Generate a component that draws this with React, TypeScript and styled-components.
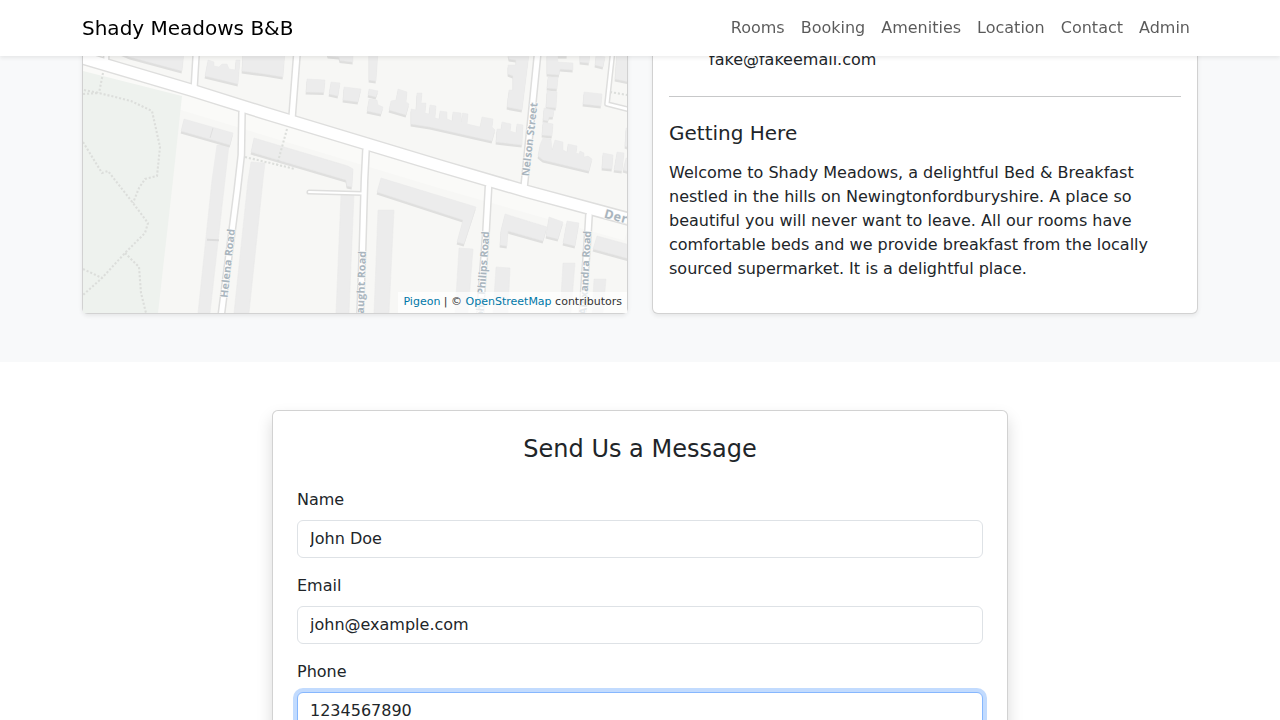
import React from "react";
import styled, { createGlobalStyle, css } from "styled-components";

const GlobalStyle = createGlobalStyle`
  *, *::before, *::after { box-sizing: border-box; }
  body {
    margin: 0;
    background: #fff;
    color: #212529;
    font-family: "DejaVu Sans", sans-serif;
    font-size: 16px;
    line-height: 1.5;
  }
`;

const Page = styled.div`
  height: 720px;
  overflow: hidden;
`;

const Navbar = styled.nav`
  position: fixed;
  top: 0;
  left: 0;
  right: 0;
  z-index: 10;
  height: 56px;
  background: #fff;
  box-shadow: 0 2px 4px rgba(0, 0, 0, 0.075);
`;

const Container = styled.div`
  width: 1116px;
  margin: 0 auto;
`;

const NavInner = styled(Container)`
  display: flex;
  align-items: center;
  justify-content: space-between;
  height: 100%;
`;

const Brand = styled.a`
  color: #000;
  font-size: 20px;
  line-height: 30px;
  text-decoration: none;
`;

const NavLinks = styled.div`
  display: flex;
`;

const NavLink = styled.a`
  padding: 8px;
  color: rgba(0, 0, 0, 0.65);
  text-decoration: none;
`;

const LocationSection = styled.section`
  padding-bottom: 48px;
  background: #f8f9fa;
`;

const LocationRow = styled(Container)`
  display: grid;
  grid-template-columns: 1fr 1fr;
  gap: 24px;
  height: 314px;
`;

const cardBase = css`
  border: 1px solid rgba(0, 0, 0, 0.175);
  background-color: #fff;
  background-clip: border-box;
`;

const LocationCard = styled.div`
  ${cardBase}
  position: relative;
  min-width: 0;
  border-top: 0;
  border-radius: 0 0 6px 6px;
  box-shadow: 0 2px 4px rgba(0, 0, 0, 0.075);
`;

const MapCard = styled(LocationCard)``;

const MapViewport = styled.div`
  position: relative;
  height: 313px;
  overflow: hidden;
`;

const MapSvg = styled.svg`
  display: block;
  width: 544px;
  height: 313px;
  font-family: "Open Sans", sans-serif;
`;

const Attribution = styled.div`
  position: absolute;
  right: 0;
  bottom: 0;
  padding: 2px 5px 3px;
  background: rgba(255, 255, 255, 0.7);
  color: #333;
  font-size: 11px;
  line-height: 16.5px;
  white-space: nowrap;

  a {
    color: #0078a8;
    text-decoration: none;
  }
`;

const InfoCard = styled(LocationCard)`
  padding: 48px 16px 16px;
`;

const ContactLine = styled.p`
  margin: 0 0 24px;
  padding-left: 40px;
`;

const Divider = styled.hr`
  margin: 0 0 24px;
  border: 0;
  border-top: 1px solid #212529;
  opacity: 0.25;
`;

const InfoTitle = styled.h4`
  margin: 0 0 16px;
  font-size: 20px;
  font-weight: 500;
  line-height: 24px;
`;

const InfoText = styled.p`
  margin: 0;
`;

const ContactSection = styled.section`
  padding: 48px 0;
`;

const FormCard = styled.form`
  ${cardBase}
  width: 736px;
  margin: 0 auto;
  padding: 24px;
  border-radius: 6px;
  box-shadow: 0 8px 16px rgba(0, 0, 0, 0.15);
`;

const FormTitle = styled.h3`
  margin: 0 0 24px;
  font-size: 24px;
  font-weight: 500;
  line-height: 1.2;
  text-align: center;
`;

const Field = styled.div`
  margin-bottom: 16px;
`;

const Label = styled.label`
  display: block;
  margin-bottom: 8px;
`;

const Input = styled.input<{ $focused?: boolean }>`
  display: block;
  width: 100%;
  height: 38px;
  padding: 6px 12px;
  border: 1px solid ${(p) => (p.$focused ? "#86b7fe" : "#dee2e6")};
  border-radius: 6px;
  outline: 0;
  background: #fff;
  color: #212529;
  font: inherit;
  box-shadow: ${(p) => (p.$focused ? "0 0 0 4px rgba(13, 110, 253, 0.25)" : "none")};
`;

const roads: { d: string; w: number }[] = [
  { d: "M60 50L83 58L191 90L266 113.5L440 166L527 191.5L640 222", w: 12 },
  { d: "M107 40L106 64", w: 5 },
  { d: "M197 40L194 90", w: 6 },
  { d: "M298 40L292 118", w: 6.4 },
  { d: "M242 112L241.3 155L237.3 190L220 325", w: 6.2 },
  { d: "M366 150L364.5 180L362.5 250L360 320", w: 6.4 },
  { d: "M309 192L363 193.5", w: 3.4 },
  { d: "M488.5 187L486 232L481 300L480 320", w: 6.4 },
  { d: "M589 215L588 232L582 320", w: 6.4 },
  { d: "M539 40L531 120L524 188", w: 6.4 },
  { d: "M614 40L607 104L635 111", w: 4 },
];

const footpaths = [
  "M103 73L99 93",
  "M84 90L99 93L131 101L152 111L160 147L157 176L145 179L139 188L133 203",
  "M83 94L99 93",
  "M83 142L102 173L108 171L133 203L148 223L145 233L125 253L102 278L83 295",
  "M83 269L102 278",
  "M125 253L139 267L141 293L146 313",
];

const sidePaths = ["M287 129L277 165", "M245 157L295 169", "M610 92L627 95"];

const houses = [
  "118,52 184,52 182,71 130,57",
  "208,60 214,62 214,66 219,67 222,64 227,64 229,69 235,70 236,60 240,60 238,84 205,76",
  "243,52 285,52 283,77 265,74 242,71",
  "184,119 233,133 230,145 181,131",
  "254,138 348,166 353,169 352,187 347,186 346,180 251,152",
  "381,178 476,207 464,244 457,242 463,220 377,192",
  "505,214 547,227 543,241 508,231 507,246 500,245 501,230",
  "549,217 563,222 558,239 546,236",
  "567,221 579,223 575,246 563,243",
  "597,236 630,245 630,259 593,249",
  "307,79 325,80 324,92.5 306,92",
  "331,82 340,83 338,96 329,94",
  "344,87 361,89 358,102 343,100",
  "369,89 378,91 376,97 368,95",
  "369,99 377,100 378,105 383,107 381,114 367,111",
  "398,89 407,92 406,102 409,104 406,115 389,110 391,101 396,100",
  "369,52 378,52 376,81 369,80",
  "327,52 353,52 353,62 340,60.5 339,57 328,56",
  "417,93 422,93 421,103 426,103 425,113 429,114 430,105 436,106 435,118 439,119 440,111 447,112 447,119 452,121 453,112 461,113 461.5,122 462.5,113 468,114 467,124 480,127 482,117 493,119 492,127 495,130 492,141 430,127 411,124 411,109 416,110",
  "502,122 511,124 510,131 516,133 517,124 523,125 522,145 496,142 497,129 501,129",
  "508,54 529,54 522,110 507,107 508,98 509,90 513,90 513,76 508,74 508,65 516,65 516,60 509,59",
  "547,54 557,54 558,62 573,63 573,70 560,69 559,75 547,74",
  "548,77 558,77 557,89 547,88",
  "547,91 557,92 556,108 546,107",
  "544,108 554,110 553,117 549,117 548,121 543,120",
  "543,122 553,124 552,136 542,135",
  "543,138 551,139 552,150 555,140 563,142 563,150 567,152 568,144 577,146 576,153 579,154 580,151 584,153 584,157 588,156 592,159 589,171 543,160 538,156 540,145",
  "584,92 602,94 601,106 583,104",
  "580,52 590,52 589,63 580,62",
  "596,55 605,57 603,67 595,65",
  "617,52 630,52 630,82 615,79",
  "603,153 613,155 612,169 602,168",
  "617,152 624,153 622,171 614,170",
  "626,158 630,158 630,172 623,170",
  "626,128 630,128 630,148 625,146",
  "558,52 567,52 567,56 558,56",
];

const terraces = [
  "217,145 229,145 225,180 210,313 198,313 212,180",
  "251,162 265,163 263,180 249,313 234,313 248,180",
  "341,194 354,194 349,313 336,313",
  "378,210 394,210 389,313 374,313",
  "459,248 473,249 468,313 455,313",
  "496,267 510,268 508,313 493,313",
  "563,263 575,263 571,313 560,313",
  "594,279 606,279 603,313 592,313",
];

interface RoadLabel {
  text: string;
  x: number;
  y: number;
  angle: number;
  length: number;
  end?: boolean;
  size?: number;
}

const roadLabels: RoadLabel[] = [
  { text: "Helena Road", x: 227.5, y: 298, angle: -83.7, length: 69 },
  { text: "Connaught Road", x: 366, y: 251, angle: -88, length: 91, end: true },
  { text: "John Philips Road", x: 489.3, y: 231.5, angle: -86, length: 90, end: true },
  { text: "Alexandra Road", x: 591, y: 231, angle: -87, length: 84, end: true },
  { text: "Nelson Street", x: 529, y: 176.5, angle: -83.3, length: 74 },
  { text: "Derby Road", x: 603.5, y: 217.5, angle: 15, length: 76, size: 12.5 },
];

function StreetMap() {
  return (
    <MapSvg viewBox="83 0 544 313">
      <rect x="83" y="0" width="544" height="313" fill="#f7f7f5" />
      <path
        d="M83 70L245 119L440 178L627 231"
        fill="none"
        stroke="#fafaf8"
        strokeWidth="20"
      />
      <polygon points="83,71 182,96 173,180 158,313 83,313" fill="#eef2ee" />
      <g fill="#ececec" stroke="#e8e8e8" strokeWidth="0.5">
        {terraces.map((p) => (
          <polygon key={p} points={p} />
        ))}
      </g>
      <path d="M207 239.7L219 240.3" stroke="#dcdcdc" strokeWidth="2" />
      <g fill="#dfdfde" transform="translate(-0.4 2.6)">
        {houses.map((p) => (
          <polygon key={p} points={p} />
        ))}
      </g>
      <g fill="#ececec" stroke="#e9e9e9" strokeWidth="0.5">
        {houses.map((p) => (
          <polygon key={p} points={p} />
        ))}
      </g>
      <path d="M213 128L210 138" stroke="#dcdcdc" strokeWidth="0.8" />
      <g fill="none" stroke="#dcdedb" strokeWidth="2.1" strokeDasharray="2.1 1.9">
        {[...footpaths, ...sidePaths].map((d) => (
          <path key={d} d={d} />
        ))}
      </g>
      <g fill="none" stroke="#dededd" strokeLinejoin="round" strokeLinecap="round">
        {roads.map((r) => (
          <path key={r.d} d={r.d} strokeWidth={r.w + 1.8} />
        ))}
      </g>
      <g fill="none" stroke="#fff" strokeLinejoin="round" strokeLinecap="round">
        {roads.map((r) => (
          <path key={r.d} d={r.d} strokeWidth={r.w - 1.2} />
        ))}
      </g>
      <g
        fill="#a9b5be"
        fontWeight="700"
        stroke="#f9f9f8"
        strokeWidth="1.2"
        paintOrder="stroke"
      >
        {roadLabels.map((l) => (
          <text
            key={l.text}
            transform={`translate(${l.x} ${l.y}) rotate(${l.angle})`}
            fontSize={l.size ?? 10.5}
            textAnchor={l.end ? "end" : "start"}
            textLength={l.length}
          >
            {l.text}
          </text>
        ))}
      </g>
    </MapSvg>
  );
}

const links = ["Rooms", "Booking", "Amenities", "Location", "Contact", "Admin"];

const fields = [
  { id: "name", label: "Name", value: "John Doe" },
  { id: "email", label: "Email", value: "john@example.com" },
  { id: "phone", label: "Phone", value: "1234567890", focused: true },
];

export default function App() {
  return (
    <Page>
      <GlobalStyle />
      <Navbar>
        <NavInner>
          <Brand>Shady Meadows B&amp;B</Brand>
          <NavLinks>
            {links.map((link) => (
              <NavLink key={link}>{link}</NavLink>
            ))}
          </NavLinks>
        </NavInner>
      </Navbar>
      <LocationSection>
        <LocationRow>
          <MapCard>
            <MapViewport>
              <StreetMap />
              <Attribution>
                <a>Pigeon</a> | © <a>OpenStreetMap</a> contributors
              </Attribution>
            </MapViewport>
          </MapCard>
          <InfoCard>
            <ContactLine>fake@fakeemail.com</ContactLine>
            <Divider />
            <InfoTitle>Getting Here</InfoTitle>
            <InfoText>
              Welcome to Shady Meadows, a delightful Bed &amp; Breakfast nestled in the hills on
              Newingtonfordburyshire. A place so beautiful you will never want to leave. All our
              rooms have comfortable beds and we provide breakfast from the locally sourced
              supermarket. It is a delightful place.
            </InfoText>
          </InfoCard>
        </LocationRow>
      </LocationSection>
      <ContactSection>
        <FormCard>
          <FormTitle>Send Us a Message</FormTitle>
          {fields.map((f) => (
            <Field key={f.id}>
              <Label htmlFor={f.id}>{f.label}</Label>
              <Input id={f.id} defaultValue={f.value} $focused={f.focused} />
            </Field>
          ))}
        </FormCard>
      </ContactSection>
    </Page>
  );
}
